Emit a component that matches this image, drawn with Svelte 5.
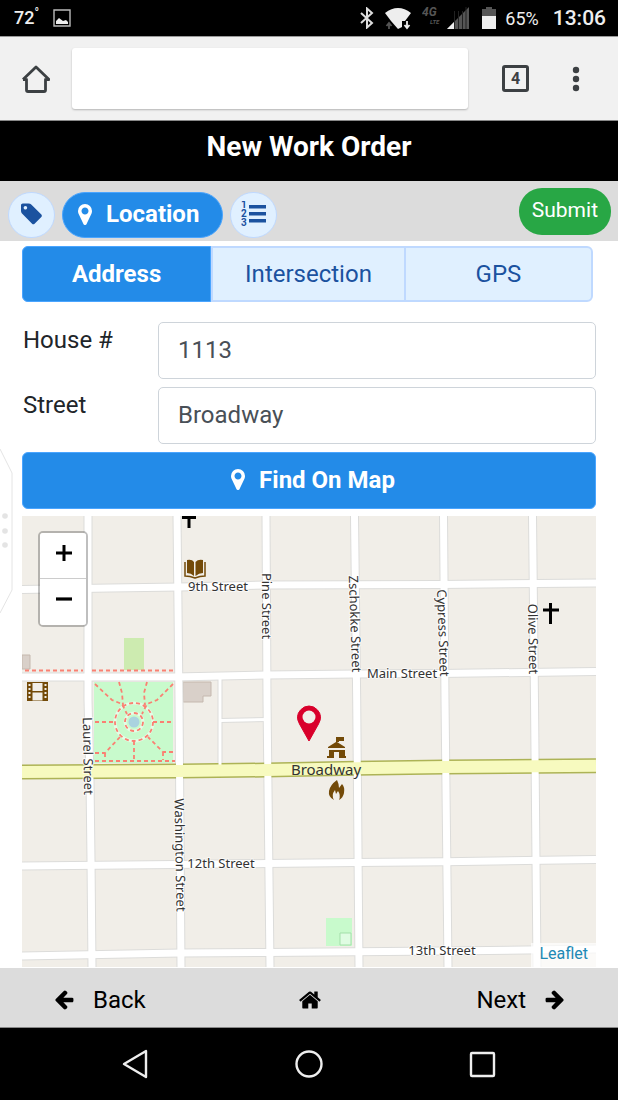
<script>
    let tab = $state("Address");
    let house = $state("1113");
    let street = $state("Broadway");

    const tabs = ["Address", "Intersection", "GPS"];

    const marker = "M768 640q0-106-75-181t-181-75-181 75-75 181 75 181 181 75 181-75 75-181zm256 0q0 109-33 179l-364 774q-16 33-47.5 52t-67.5 19-67.5-19-46.5-52l-365-774q-33-70-33-179 0-212 150-362t362-150 362 150 150 362z";
    const arrow = "M1664 896v128q0 53-32.5 90.5t-84.5 37.5h-704l293 294q38 36 38 90t-38 90l-75 76q-37 37-90 37-52 0-91-37l-651-652q-37-37-37-90 0-52 37-91l651-650q38-38 91-38 52 0 90 38l75 74q38 38 38 91t-38 91l-293 293h704q52 0 84.5 37.5t32.5 90.5z";

    const broadway = "0,256 158,255 244,254 334,252.3 423,251 574,249.7";
    const roads = [
        "66,0 66,184 68,264 69,344 70,451",
        "155,0 157,184 159,451",
        "244,0 245,184 248,451",
        "332.5,0 334.7,184 337,451",
        "421.5,0 423,184 426,451",
        "510.5,0 512.5,184 515,451",
        "0,73.5 88,72 158,71 244,69 418,68.5 574,67",
        "0,161 153,161 244,159 334,158 418,157.5 574,155.5",
        "0,350 153,348.5 244,347.5 334,346.5 423,345.7 574,343.5",
        "0,440 158,437 244,436.5 423,435 574,433"
    ];
    const alleys = ["198,162 198,254", "198,204.5 245,203.5"];

    const labels = [
        { text: "9th Street", x: 196, y: 72, angle: 0 },
        { text: "Main Street", x: 380, y: 159, angle: 0 },
        { text: "12th Street", x: 199, y: 349, angle: 0 },
        { text: "13th Street", x: 420, y: 436, angle: 0 },
        { text: "Laurel Street", x: 65, y: 240, angle: 89 },
        { text: "Washington Street", x: 157, y: 339, angle: 89 },
        { text: "Pine Street", x: 243, y: 90, angle: 90 },
        { text: "Zschokke Street", x: 332, y: 108, angle: 88 },
        { text: "Cypress Street", x: 420, y: 117, angle: 88 },
        { text: "Olive Street", x: 510, y: 123, angle: 89 }
    ];
</script>

<div class="screen">
    <div class="status">
        <span class="temp">72<sup>°</sup></span>
        <svg class="photo" width="18" height="18" viewBox="0 0 18 18">
            <path d="M1 1h16v16H1z" fill="none" stroke="#bbb" stroke-width="1.4" />
            <path d="M3 15v-3l3-3 4 3 3-1 2 2v2z" fill="#eee" />
        </svg>
        <span class="spacer"></span>
        <svg width="14" height="22" viewBox="0 0 14 22">
            <path d="M1 6l11 10-5 4.500V1.500L12 6 1 16" fill="none" stroke="#ddd" stroke-width="2" />
        </svg>
        <svg class="wifi" width="28" height="24" viewBox="0 0 28 24">
            <path d="M1 7q13-10 26 0l-6 8h-3v6l-4 2-7-8z" fill="#eee" />
            <path d="M5 23v-6m-2.500 3L5 17l2.500 3" fill="none" stroke="#555" stroke-width="1.8" />
            <path d="M23 15v7m-2.500-3l2.500 3 2.500-3" fill="none" stroke="#eee" stroke-width="1.8" />
        </svg>
        <svg class="network" width="20" height="24" viewBox="0 0 20 24">
            <text x="0" y="10" class="g4">4G</text>
            <text x="8" y="18" class="lte">LTE</text>
        </svg>
        <svg class="signal" width="23" height="24" viewBox="0 0 23 24">
            <path d="M23 1v22H1z" fill="#555" />
            <path d="M8 16v7H1z" fill="#eee" />
            <path d="M8.500 5v18M12.500 5v18M16.500 5v18M20 1v22" stroke="#222" stroke-width="1" />
        </svg>
        <svg class="battery" width="14" height="22" viewBox="0 0 14 22">
            <path d="M4 0h6v2h4v8H0V2h4z" fill="#555" />
            <path d="M0 9h14v13H0z" fill="#eee" />
        </svg>
        <span class="percent">65%</span>
        <span class="clock">13:06</span>
    </div>

    <div class="browser">
        <button class="plain" aria-label="Home page">
            <svg width="28" height="28" viewBox="0 0 28 28">
                <path d="M1 14.500h3.500V25q0 1.500 1.500 1.500h16q1.500 0 1.500-1.500V14.500H27L14 2 1 14.500" fill="none" stroke="#3c4043" stroke-width="2.800" stroke-linejoin="round" />
            </svg>
        </button>
        <input class="url" type="text" aria-label="Web address" />
        <button class="plain count" aria-label="Open tabs">4</button>
        <button class="plain" aria-label="More">
            <svg width="8" height="26" viewBox="0 0 8 26" fill="#3c4043">
                <circle cx="4" cy="4" r="3.200" /><circle cx="4" cy="13" r="3.200" /><circle cx="4" cy="22" r="3.200" />
            </svg>
        </button>
    </div>

    <h1>New Work Order</h1>

    <div class="steps">
        <button class="pill round" aria-label="Details">
            <svg width="22" height="22" viewBox="0 100 1600 1600" fill="#1b529f">
                <path d="M448 448q0-53-37.500-90.500t-90.500-37.500-90.500 37.500-37.500 90.500 37.500 90.500 90.500 37.500 90.500-37.500 37.500-90.500zm1067 576q0 53-37 90l-491 492q-39 37-91 37-53 0-90-37l-715-716q-38-37-64.500-101t-26.500-117v-416q0-52 38-90t90-38h416q53 0 117 26.500t102 64.500l715 714q37 39 37 91z" />
            </svg>
        </button>
        <button class="pill current">
            <svg width="14" height="21" viewBox="0 128 1024 1536" fill="#fff"><path d={marker} /></svg>
            Location
        </button>
        <button class="pill round" aria-label="List">
            <svg width="26" height="26" viewBox="0 0 26 26" fill="#1b529f">
                <path d="M8 4h17v3.500H8zM8 11h17v3.500H8zM8 18h17v3.500H8z" />
                <text x="0" y="7">1</text>
                <text x="0" y="16">2</text>
                <text x="0" y="25">3</text>
            </svg>
        </button>
        <button class="submit">Submit</button>
    </div>

    <main>
        <div class="tabs">
            {#each tabs as name}
                <button class:active={tab === name} onclick={() => {tab = name}}>{name}</button>
            {/each}
        </div>

        <div class="field">
            <label for="house">House #</label>
            <input id="house" type="text" bind:value={house} />
        </div>
        <div class="field">
            <label for="street">Street</label>
            <input id="street" type="text" bind:value={street} />
        </div>

        <button class="find">
            <svg width="14" height="21" viewBox="0 128 1024 1536" fill="#fff"><path d={marker} /></svg>
            Find On Map
        </button>

        <div class="map">
            <svg class="tiles" viewBox="0 0 574 451" preserveAspectRatio="xMidYMid slice">
                <rect width="574" height="451" fill="#f1eee8" />

                <!-- parks and buildings -->
                <path d="M102 122h20v32h-20z" fill="#cdebb0" />
                <path d="M72 166h79v81H72z" fill="#c8facc" />
                <path d="M304 402h26v28h-26z" fill="#c8facc" />
                <path d="M318 417h11v12h-11z" fill="#dffce2" stroke="#a3dfa9" />
                <path d="M0 139h8v14H0zM161 166h28v14h-8v6h-20z" fill="#d9d0c9" stroke="#c5b8ae" />

                <!-- street edges first, so that the crossings stay open -->
                {#each alleys as points}
                    <polyline {points} class="edge alley" />
                {/each}
                {#each roads as points}
                    <polyline {points} class="edge" />
                {/each}
                <polyline points={broadway} class="main-edge" />
                {#each alleys as points}
                    <polyline {points} class="road alley" />
                {/each}
                {#each roads as points}
                    <polyline {points} class="road" />
                {/each}
                <polyline points={broadway} class="main-road" />

                <!-- footpaths -->
                <g fill="none" stroke="#fff" stroke-opacity=".5" stroke-width="3">
                    <circle cx="112" cy="206" r="19" /><circle cx="112" cy="206" r="9" />
                </g>
                <g class="path">
                    <path d="M3 154.500h58M70 154.500h81M73 245h80" />
                    <path d="M73 168l17 16 10 4 5 10M151 168l-16 16-10 4-5 10M97 166l3 11 1 12M125 166l-3 11 1 12" />
                    <path d="M73 206h20M131 206h20M112 225v20M73 237h10l15-16M83 237v8M151 236h-10l-15-15M141 236v8" />
                    <circle cx="112" cy="206" r="19" />
                    <circle cx="112" cy="206" r="9" />
                </g>
                <circle cx="112" cy="206" r="5.500" fill="#aad3df" />

                <!-- places -->
                <path d="M160 1.500h14M167 0v12M521 94h16M528.500 87v21" stroke="#000" stroke-width="3" />
                <g fill="#734a08">
                    <path d="M165 44q5-1 7 2v14q-3-3-7-3zM181 44q-5-1-7.500 2v14q3.500-3 7.500-3z" />
                    <path d="M163 46v14q5 0 10 2 5-2 10-2V46" fill="none" stroke="#734a08" stroke-width="1.500" />
                    <path d="M5 166h21v19H5zM10.500 167v8h10v-8zM10.500 176.500v8h10v-8zM6.500 168v2h2v-2zM6.500 172v2h2v-2zM6.500 176v2h2v-2zM6.500 180v2h2v-2zM22.500 168v2h2v-2zM22.500 172v2h2v-2zM22.500 176v2h2v-2zM22.500 180v2h2v-2z" fill-rule="evenodd" />
                    <path d="M314 221h1v5l8 5v1h-17v-1l8-5zM315 221h7v4h-5v1h-2zM307 234h16v6h1v2h-19v-2h2zM312 236v6h5v-6z" fill-rule="evenodd" />
                    <path d="M315 264q2 4 2 8l3-4q3 3 2 9-1 5-5 7 2-5-1-9l-2 3-1-4q-4 5-1 10-6-3-5-9 1-6 8-11z" />
                </g>

                {#each labels as label}
                    <text class="street" text-anchor="middle" dominant-baseline="middle" transform="translate({label.x} {label.y}) rotate({label.angle})">{label.text}</text>
                {/each}
                <text class="street big" x="304" y="255" text-anchor="middle" dominant-baseline="middle">Broadway</text>

                <path d="M287 225l-9.500-17q-4.500-8 1-14 3.500-4 8.500-4t8.500 4q5.500 6 1 14z" fill="#d9002b" stroke="#d9002b" />
                <circle cx="287" cy="201" r="6.500" fill="#f1eee8" />
            </svg>

            <div class="zoom">
                <button aria-label="Zoom in"><svg width="18" height="18" viewBox="0 0 18 18"><path d="M1 9h16M9 1v16" stroke="#000" stroke-width="3" /></svg></button>
                <button aria-label="Zoom out"><svg width="18" height="18" viewBox="0 0 18 18"><path d="M1 9h16" stroke="#000" stroke-width="3.200" /></svg></button>
            </div>
            <a class="credit" href="#leaflet">Leaflet</a>
        </div>

        <svg class="drawer" width="13" height="166" viewBox="0 0 13 166">
            <path d="M0 1l12 24v117L0 165" fill="#fff" stroke="#e4e4e4" />
            <g fill="#e4e4e4"><circle cx="5" cy="68" r="2.800" /><circle cx="5" cy="83" r="2.800" /><circle cx="5" cy="97" r="2.800" /></g>
        </svg>
    </main>

    <footer>
        <button><svg width="22" height="22" viewBox="0 64 1792 1792"><path d={arrow} /></svg>Back</button>
        <button aria-label="Home">
            <svg width="24" height="24" viewBox="0 0 1792 1792">
                <path d="M1472 992v480q0 26-19 45t-45 19h-384v-384h-256v384h-384q-26 0-45-19t-19-45v-480q0-1 .5-3t.5-3l575-474 575 474q1 2 1 6zm223-69l-62 74q-8 9-21 11h-3q-13 0-21-7l-692-577-692 577q-12 8-24 7-13-2-21-11l-62-74q-8-10-7-23.500t11-21.500l719-599q32-26 76-26t76 26l244 204v-195q0-14 9-23t23-9h192q14 0 23 9t9 23v408l219 182q10 8 11 21.500t-7 23.500z" />
            </svg>
        </button>
        <button>Next<svg class="flip" width="22" height="22" viewBox="0 64 1792 1792"><path d={arrow} /></svg></button>
    </footer>

    <nav>
        <button aria-label="System back"><svg width="30" height="30" viewBox="0 0 30 30"><path d="M26 2v26L4 15z" /></svg></button>
        <button aria-label="System home"><svg width="30" height="30" viewBox="0 0 30 30"><circle cx="15" cy="15" r="12.500" /></svg></button>
        <button aria-label="Recent apps"><svg width="30" height="30" viewBox="0 0 30 30"><rect x="3" y="4" width="23" height="23" rx="1" /></svg></button>
    </nav>
</div>

<style>
    :global(body) {
        margin: 0;
        background: #fff;
    }
    .screen {
        font-family: Roboto, "Liberation Sans", sans-serif;
        font-size: 24px;
        color: #212529;
    }
    .screen * {
        box-sizing: border-box;
    }
    button, input {
        font: inherit;
        margin: 0;
    }
    button {
        display: flex;
        align-items: center;
        justify-content: center;
        padding: 0;
        border: 0;
        background: none;
        color: inherit;
        cursor: pointer;
    }

    .status {
        display: flex;
        align-items: center;
        height: 36px;
        padding: 0 12px 0 14px;
        background: #000;
        color: #eee;
    }
    .temp {
        font-size: 18px;
        font-weight: 500;
        line-height: 20px;
    }
    .temp sup {
        font-size: 12px;
        line-height: 0;
    }
    .photo {
        margin-left: 14px;
    }
    .spacer {
        flex: 1;
    }
    .wifi {
        margin-left: 10px;
    }
    .network {
        margin: 0 4px 0 10px;
        fill: #555;
        font-weight: 700;
        font-style: italic;
    }
    .g4 {
        font-size: 12px;
    }
    .lte {
        font-size: 6px;
    }
    .battery {
        margin: 0 9px 0 13px;
    }
    .percent {
        font-size: 18px;
    }
    .clock {
        margin-left: 14px;
        font-size: 21px;
        font-weight: 500;
    }

    .browser {
        display: flex;
        align-items: center;
        height: 85px;
        padding: 0 38px 0 22px;
        border-top: 1px solid #999;
        border-bottom: 1px solid #888;
        background: #f1f1f1;
    }
    .url {
        flex: 1;
        min-width: 0;
        height: 61px;
        margin: 0 34px 0 22px;
        border: 0;
        border-radius: 3px;
        background: #fff;
        box-shadow: 0 1px 2px rgba(0, 0, 0, 0.25);
    }
    .count {
        width: 27px;
        height: 27px;
        margin-right: 43px;
        border: 3px solid #3c4043;
        border-radius: 3px;
        color: #3c4043;
        font-size: 16px;
        font-weight: 700;
    }

    h1 {
        height: 60px;
        margin: 0;
        padding-top: 10px;
        background: #000;
        color: #fff;
        font-size: 28px;
        font-weight: 700;
        line-height: 32px;
        text-align: center;
    }

    .steps {
        display: flex;
        align-items: flex-start;
        gap: 7px;
        height: 60px;
        padding: 7px 7px 0 8px;
        background: #dcdcdc;
    }
    .pill {
        height: 46px;
        margin-top: 4px;
        padding-bottom: 2px;
        border: 1px solid #bfd9ff;
        border-radius: 23px;
        background: #e0f0ff;
    }
    .round {
        width: 47px;
    }
    .round text {
        font-size: 10px;
        font-weight: 700;
    }
    .current {
        gap: 14px;
        padding: 0 23px 2px 15px;
        border-color: #4aa5ff;
        background: #238be8;
        color: #fff;
        font-weight: 700;
    }
    .submit {
        height: 47px;
        margin-left: auto;
        padding: 0 13px 3px;
        border-radius: 23px;
        background: #28a745;
        color: #fff;
        font-size: 21px;
    }

    main {
        position: relative;
        padding: 5px 22px 1px;
    }
    .tabs {
        display: grid;
        grid-template-columns: 33% 34% 33%;
        height: 56px;
        margin: 0 3px 20px 0;
        border: 2px solid #bfd9ff;
        border-radius: 6px;
        background: #e0f0ff;
        color: #1b529f;
    }
    .tabs button {
        margin: -2px 0;
    }
    .tabs button + button {
        border-left: 2px solid #bfd9ff;
    }
    .tabs .active {
        margin-left: -2px;
        border: 1px solid #4aa5ff;
        border-radius: 6px 0 0 6px;
        background: #238be8;
        color: #fff;
        font-weight: 700;
    }
    .field {
        display: flex;
        margin-bottom: 8px;
    }
    label {
        width: 136px;
        padding: 4px 0 0 1px;
        line-height: 28px;
    }
    .field input {
        flex: 1;
        min-width: 0;
        height: 57px;
        padding: 0 19px 2px;
        border: 1px solid #ced4da;
        border-radius: 5px;
        background: #fff;
        color: #495057;
    }
    .find {
        gap: 14px;
        width: 100%;
        height: 57px;
        margin-bottom: 7px;
        padding: 0 0 2px 8px;
        border: 1px solid #4aa5ff;
        border-radius: 6px;
        background: #238be8;
        color: #fff;
        font-weight: 700;
    }

    .map {
        position: relative;
    }
    .tiles {
        display: block;
        width: 100%;
    }
    .edge, .road, .main-edge, .main-road {
        fill: none;
    }
    .edge {
        stroke: #dcdcda;
        stroke-width: 9;
    }
    .road {
        stroke: #fff;
        stroke-width: 7;
    }
    .edge.alley {
        stroke-width: 5;
    }
    .road.alley {
        stroke-width: 3;
    }
    .main-edge {
        stroke: #adb356;
        stroke-width: 15;
    }
    .main-road {
        stroke: #f7fabf;
        stroke-width: 12;
    }
    .path {
        fill: none;
        stroke: #fa8072;
        stroke-width: 1.8;
        stroke-dasharray: 4 3;
    }
    .street {
        font-family: "Noto Sans", sans-serif;
        font-size: 13px;
        fill: #333;
        stroke: rgba(255, 255, 255, 0.7);
        stroke-width: 2;
        paint-order: stroke;
    }
    .big {
        font-size: 15px;
        stroke: none;
    }
    .zoom {
        position: absolute;
        top: 15px;
        left: 16px;
        width: 50px;
        border: 2px solid rgba(0, 0, 0, 0.25);
        border-radius: 5px;
        background-clip: padding-box;
    }
    .zoom button {
        width: 46px;
        height: 46px;
        padding: 0 0 6px 2px;
        border-radius: 0 0 3px 3px;
        background: #fff;
    }
    .zoom button:first-child {
        border-bottom: 1px solid #ccc;
        border-radius: 3px 3px 0 0;
    }
    .credit {
        position: absolute;
        right: 0;
        bottom: 0;
        padding: 0 8px 2px;
        background: rgba(255, 255, 255, 0.7);
        color: #2089b5;
        font-size: 16px;
        line-height: 22px;
        text-decoration: none;
    }
    .drawer {
        position: absolute;
        top: 207px;
        left: 0;
    }

    footer {
        display: grid;
        grid-template-columns: 1fr auto 1fr;
        align-items: center;
        height: 60px;
        padding: 5px 52px 0 53px;
        border-bottom: 1px solid #888;
        background: #dcdcdc;
        color: #000;
    }
    footer button {
        gap: 18px;
        justify-self: start;
    }
    footer button:last-child {
        justify-self: end;
    }
    .flip {
        transform: scaleX(-1);
    }

    nav {
        display: grid;
        grid-template-columns: repeat(3, 1fr);
        align-items: center;
        height: 72px;
        padding: 0 48px;
        background: #000;
    }
    nav svg {
        fill: none;
        stroke: #eee;
        stroke-width: 2.4;
        stroke-linejoin: round;
    }
</style>
